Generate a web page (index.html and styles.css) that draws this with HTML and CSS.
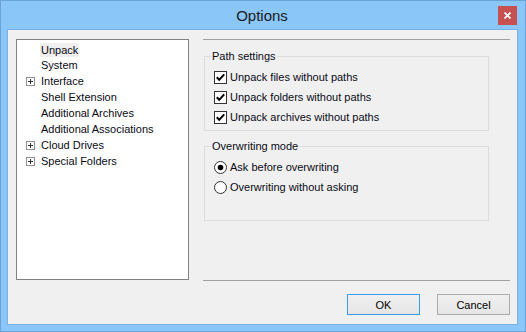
FILE: index.html
```html
<!DOCTYPE html>
<html>
<head>
<meta charset="utf-8">
<link rel="stylesheet" href="styles.css">
</head>
<body>
<div class="window">
  <div class="titlebar">
    <span class="title">Options</span>
    <span class="close"><svg width="7" height="7" viewBox="0 0 7 7"><path d="M0.5 0.5L6.5 6.5M6.5 0.5L0.5 6.5" stroke="#fff" stroke-width="1.7" fill="none"/></svg></span>
  </div>
  <div class="client">
    <div class="main">
      <div class="tree">
        <div class="node"><span class="exp"></span><span class="label sel">Unpack</span></div>
        <div class="node"><span class="exp"></span><span class="label">System</span></div>
        <div class="node"><span class="exp plus"></span><span class="label">Interface</span></div>
        <div class="node"><span class="exp"></span><span class="label">Shell Extension</span></div>
        <div class="node"><span class="exp"></span><span class="label">Additional Archives</span></div>
        <div class="node"><span class="exp"></span><span class="label">Additional Associations</span></div>
        <div class="node"><span class="exp plus"></span><span class="label">Cloud Drives</span></div>
        <div class="node"><span class="exp plus"></span><span class="label">Special Folders</span></div>
      </div>
      <div class="panel">
        <fieldset class="group">
          <legend>Path settings</legend>
          <div class="opt"><span class="box"><svg width="13" height="13" viewBox="0 0 13 13"><rect x="0.5" y="0.5" width="12" height="12" fill="#fff" stroke="#333"/><path d="M2.8 6.3L5.2 8.8L10.2 3.3" stroke="#000" stroke-width="2" fill="none"/></svg></span>Unpack files without paths</div>
          <div class="opt"><span class="box"><svg width="13" height="13" viewBox="0 0 13 13"><rect x="0.5" y="0.5" width="12" height="12" fill="#fff" stroke="#333"/><path d="M2.8 6.3L5.2 8.8L10.2 3.3" stroke="#000" stroke-width="2" fill="none"/></svg></span>Unpack folders without paths</div>
          <div class="opt"><span class="box"><svg width="13" height="13" viewBox="0 0 13 13"><rect x="0.5" y="0.5" width="12" height="12" fill="#fff" stroke="#333"/><path d="M2.8 6.3L5.2 8.8L10.2 3.3" stroke="#000" stroke-width="2" fill="none"/></svg></span>Unpack archives without paths</div>
        </fieldset>
        <fieldset class="group">
          <legend>Overwriting mode</legend>
          <div class="opt"><span class="box"><svg width="13" height="13" viewBox="0 0 13 13"><circle cx="6.5" cy="6.5" r="6" fill="#fff" stroke="#333"/><circle cx="6.5" cy="6.5" r="2.8" fill="#000"/></svg></span>Ask before overwriting</div>
          <div class="opt"><span class="box"><svg width="13" height="13" viewBox="0 0 13 13"><circle cx="6.5" cy="6.5" r="6" fill="#fff" stroke="#333"/></svg></span>Overwriting without asking</div>
        </fieldset>
      </div>
    </div>
    <div class="footer">
      <button class="btn default">OK</button>
      <button class="btn">Cancel</button>
    </div>
  </div>
</div>
</body>
</html>
```

FILE: styles.css
```css
* { box-sizing: border-box; }
html, body { margin: 0; padding: 0; }
body { width: 526px; height: 332px; overflow: hidden; font-family: "Liberation Sans", Arial, sans-serif; font-size: 11px; color: #000; }

.window {
  position: relative;
  width: 526px; height: 332px;
  background: #8ac6f8;
  border: 1px solid #6ba3d8;
  padding: 0 7px 6px 6px;
  display: flex; flex-direction: column;
}

.titlebar {
  height: 28px;
  display: grid;
  grid-template-columns: 1fr auto 1fr;
  align-items: start;
  padding: 0 1px 0 0;
}
.title {
  grid-column: 2;
  font-size: 15px;
  line-height: 18px;
  margin-top: 6px;
  color: #1a1a1a;
}
.close {
  grid-column: 3;
  justify-self: end;
  width: 19px; height: 19px;
  margin-top: 5px;
  background: #c75050;
  display: flex; align-items: center; justify-content: center;
}
.close svg { display: block; }

.client {
  flex: 1;
  background: #f0f0f0;
  border: 1px solid #77b0e6;
  padding: 9px 7px 8px 8px;
  display: flex; flex-direction: column;
}

.main { display: flex; gap: 14px; height: 242px; }

.tree {
  width: 173px; height: 241px;
  background: #fff;
  border: 1px solid #828282;
  padding: 1px 0 0 0;
}
.node { height: 16px; display: flex; align-items: center; }
.exp { width: 9px; height: 9px; margin-left: 9px; margin-right: 5px; position: relative; flex: none; }
.exp.plus { border: 1px solid #919191; background: #fff; }
.exp.plus::before { content: ""; position: absolute; left: 1px; top: 3px; width: 5px; height: 1px; background: #333; }
.exp.plus::after { content: ""; position: absolute; left: 3px; top: 1px; width: 1px; height: 5px; background: #333; }
.label { padding: 0 1px; line-height: 14px; color: #0a0a14; white-space: nowrap; }
.label.sel { background: #efefef; margin-top: 1px; }

.panel {
  width: 307px;
  border-top: 1px solid #a0a0a0;
  border-bottom: 1px solid #a0a0a0;
  padding: 9px 0 0 1px;
  display: flex; flex-direction: column; gap: 8px;
}

.group {
  margin: 0;
  width: 285px;
  height: 82px;
  border: 1px solid #dcdcdc;
  padding: 4px 0 0 9px;
}
.group legend {
  padding: 0 1px;
  margin-left: -3px;
  line-height: 14px;
  color: #0a0a14;
}
.opt { height: 20px; display: flex; align-items: center; white-space: nowrap; color: #0a0a14; }
.box { width: 13px; height: 13px; margin-right: 3px; flex: none; }
.box svg { display: block; }

.footer {
  margin-top: 13px;
  display: flex; justify-content: flex-end; gap: 17px;
}
.btn {
  width: 73px; height: 21px;
  margin: 0; padding: 0;
  font-family: "Liberation Sans", Arial, sans-serif;
  font-size: 11px;
  color: #000;
  background: linear-gradient(#f0f0f0, #e5e5e5);
  border: 1px solid #acacac;
}
.btn.default { border-color: #3c9af0; }
```
